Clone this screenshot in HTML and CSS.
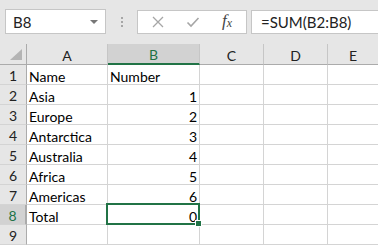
FILE: index.html
```html
<!DOCTYPE html>
<html lang="en">
<head>
  <meta charset="UTF-8">
  <meta name="viewport" content="width=device-width, initial-scale=1.0">
  <title>Sheet</title>
  <link rel="stylesheet" href="styles.css">
</head>
<body>
  <!-- Formula bar -->
  <div class="toolbar">
    <div class="name-box">
      <span>B8</span>
      <span class="drop"></span>
    </div>
    <div class="grip"><i></i><i></i><i></i></div>
    <div class="fx-box">
      <svg class="ico" width="14" height="14" viewBox="0 0 14 14"><path d="M2 2 L12 12 M12 2 L2 12" stroke="#a6a6a6" stroke-width="1.3" fill="none"/></svg>
      <svg class="ico" width="14" height="14" viewBox="0 0 14 14"><path d="M1.5 7.5 L5 11 L12.5 3" stroke="#a6a6a6" stroke-width="1.6" fill="none"/></svg>
      <span class="fx">f<sub>x</sub></span>
    </div>
    <div class="formula">=SUM(B2:B8)</div>
  </div>

  <!-- Grid -->
  <div class="sheet">
    <div class="hd corner"><span class="tri"></span></div>
    <div class="hd col">A</div>
    <div class="hd col sel-col">B</div>
    <div class="hd col">C</div>
    <div class="hd col">D</div>
    <div class="hd col">E</div>

    <div class="hd row">1</div><div class="c">Name</div><div class="c">Number</div><div class="c"></div><div class="c"></div><div class="c"></div>
    <div class="hd row">2</div><div class="c">Asia</div><div class="c n">1</div><div class="c"></div><div class="c"></div><div class="c"></div>
    <div class="hd row">3</div><div class="c">Europe</div><div class="c n">2</div><div class="c"></div><div class="c"></div><div class="c"></div>
    <div class="hd row">4</div><div class="c">Antarctica</div><div class="c n">3</div><div class="c"></div><div class="c"></div><div class="c"></div>
    <div class="hd row">5</div><div class="c">Australia</div><div class="c n">4</div><div class="c"></div><div class="c"></div><div class="c"></div>
    <div class="hd row">6</div><div class="c">Africa</div><div class="c n">5</div><div class="c"></div><div class="c"></div><div class="c"></div>
    <div class="hd row">7</div><div class="c">Americas</div><div class="c n">6</div><div class="c"></div><div class="c"></div><div class="c"></div>
    <div class="hd row sel-row">8</div><div class="c">Total</div><div class="c n active">0<span class="handle"></span></div><div class="c"></div><div class="c"></div><div class="c"></div>
    <div class="hd row">9</div><div class="c"></div><div class="c"></div><div class="c"></div><div class="c"></div><div class="c"></div>
  </div>
</body>
</html>
```

FILE: styles.css
```css
body {
  margin: 0;
  background: #fff;
  font-family: 'Lato', 'Liberation Sans', sans-serif;
  font-size: 14px;
  color: #000;
  overflow: hidden;
}
.toolbar {
  height: 44px;
  background: #e6e6e6;
  display: flex;
  align-items: flex-start;
  padding-top: 9px;
  box-sizing: border-box;
}
.name-box {
  margin-left: 5px;
  width: 101px;
  height: 25px;
  box-sizing: border-box;
  background: #fff;
  border: 1px solid #c6c6c6;
  display: flex;
  align-items: center;
  justify-content: space-between;
  padding: 0 7px 0 7px;
  font-size: 15px;
  color: #222;
}
.drop {
  width: 0;
  height: 0;
  border-left: 4px solid transparent;
  border-right: 4px solid transparent;
  border-top: 4px solid #777;
}
.grip {
  width: 31px;
  display: flex;
  flex-direction: column;
  align-items: center;
  gap: 2px;
  padding-top: 8px;
}
.grip i {
  width: 2px;
  height: 2px;
  background: #a6a6a6;
}
.fx-box {
  margin-top: 1px;
  width: 110px;
  height: 24px;
  box-sizing: border-box;
  background: #fff;
  border: 1px solid #c6c6c6;
  display: flex;
  align-items: center;
  padding-left: 13px;
  gap: 21px;
}
.fx {
  font-family: 'Liberation Serif', serif;
  font-style: italic;
  font-size: 17px;
  color: #444;
  margin-left: 1px;
  margin-top: -2px;
}
.fx sub {
  font-size: 12px;
  vertical-align: -1px;
}
.formula {
  margin-left: 4px;
  margin-top: 1px;
  flex: 1;
  height: 24px;
  box-sizing: border-box;
  background: #fff;
  border: 1px solid #c6c6c6;
  border-right: none;
  padding-left: 9px;
  display: flex;
  align-items: center;
  font-size: 15px;
  color: #222;
}
.sheet {
  display: grid;
  grid-template-columns: 27px 81px 92px 64px 64px 51px;
  grid-template-rows: 21px repeat(9, 20px);
}
.hd {
  background: #e6e6e6;
  color: #222;
  display: flex;
  align-items: center;
  justify-content: center;
  box-sizing: border-box;
  border-right: 1px solid #ababab;
  border-bottom: 1px solid #ababab;
}
.hd.col {
  border-right-color: #c6c6c6;
  padding-top: 2px;
}
.hd.row {
  border-bottom-color: #d4d4d4;
  border-right-color: #ababab;
  padding-top: 2px;
}
.corner {
  position: relative;
}
.tri {
  position: absolute;
  right: 4px;
  bottom: 4px;
  width: 12px;
  height: 11px;
  background: #b4b4b4;
  clip-path: polygon(100% 0, 100% 100%, 0 100%);
}
.sel-col {
  background: #d2d2d2;
  color: #217346;
  border-bottom: 2px solid #217346;
}
.sel-row {
  background: #d2d2d2;
  color: #217346;
  border-right: 2px solid #217346;
}
.c {
  box-sizing: border-box;
  border-right: 1px solid #d4d4d4;
  border-bottom: 1px solid #d4d4d4;
  padding: 3px 2px 0 2px;
  line-height: 17px;
  white-space: nowrap;
}
.c.n {
  text-align: right;
}
.active {
  position: relative;
}
.active::before {
  content: '';
  position: absolute;
  left: -2px;
  top: -2px;
  right: -1px;
  bottom: -1px;
  border: 2px solid #217346;
}
.handle {
  position: absolute;
  right: -3px;
  bottom: -3px;
  width: 5px;
  height: 5px;
  background: #217346;
  border: 1px solid #fff;
}
```
